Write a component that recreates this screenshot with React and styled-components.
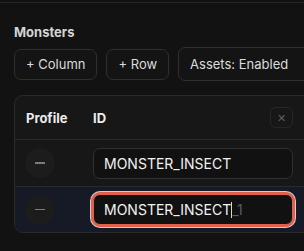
import React from 'react'
import { styled, createGlobalStyle } from 'styled-components'

const Global = createGlobalStyle`
  html, body {
    margin: 0;
    padding: 0;
    background: #121212;
    overflow: hidden;
  }
  body {
    font-family: Inter, "Noto Sans", sans-serif;
    color: #e6e6e6;
  }
`;

const Page = styled.div`
  width: 304px;
  height: 251px;
  overflow: hidden;
`;

const TopRule = styled.div`
  height: 2px;
  border-bottom: 1px solid #262626;
`;

const Section = styled.section`
  padding: 21px 0 0 14px;
`;

const Title = styled.h2`
  margin: 0 0 7px;
  font-size: 13px;
  line-height: 16px;
  font-weight: 700;
  color: #d4d4d4;
`;

const Toolbar = styled.div`
  display: flex;
  align-items: center;
  gap: 9px;
  height: 34px;
  width: 330px;
`;

const Button = styled.button`
  flex: none;
  height: 31px;
  padding: 0 ${p => p.$pad || 11}px;
  border: 1px solid #2f2f2f;
  border-radius: 7px;
  background: #141414;
  color: #dcdcdc;
  font-family: inherit;
  font-size: 13px;
  white-space: nowrap;
`;

const Select = styled(Button)`
  height: 34px;
  width: 150px;
  text-align: left;
`;

const Card = styled.div`
  margin-top: 14px;
  width: 310px;
  border: 1px solid #2a2a2a;
  border-radius: 9px;
  background: #171717;
  overflow: hidden;
`;

const Grid = styled.div`
  display: grid;
  grid-template-columns: 67px 200px 1fr;
  align-items: center;
  padding: 0 11px;
  height: ${p => p.$h}px;
  background: ${p => p.$active ? '#151a26' : 'transparent'};
  border-bottom: ${p => p.$last ? 'none' : '1px solid #2a2a2a'};
`;

const HeadCell = styled.div`
  display: flex;
  align-items: center;
  justify-content: space-between;
  font-size: 13px;
  font-weight: 700;
  color: #ececec;
`;

const CloseBtn = styled.div`
  width: 23px;
  height: 21px;
  box-sizing: border-box;
  border: 1px solid #272727;
  border-radius: 6px;
  display: flex;
  align-items: center;
  justify-content: center;
  color: #5e5e5e;
  font-size: 11px;
  font-weight: 400;
`;

const RoundBtn = styled.div`
  width: 30px;
  height: 30px;
  margin-left: -1px;
  border-radius: 50%;
  background: #1c1c1c;
  display: flex;
  align-items: center;
  justify-content: center;
  &::after {
    content: '';
    width: 10px;
    height: 1.5px;
    background: #7a7a7a;
  }
`;

const Field = styled.div`
  box-sizing: border-box;
  height: 31px;
  padding: 0 10px;
  display: flex;
  align-items: center;
  border: 1px solid ${p => p.$focus ? '#e0604c' : '#303030'};
  border-radius: 7px;
  background: #111111;
  box-shadow: ${p => p.$focus ? '0 0 0 2px #e0604c, 0 0 0 3px #cfcfcf' : 'none'};
  font-size: 14px;
  color: #f2f2f2;
  white-space: nowrap;
`;

const Caret = styled.span`
  display: inline-block;
  width: 1px;
  height: 16px;
  background: #d8d8d8;
`;

const Ghost = styled.span`
  color: #5c5c5c;
`;

export default function App() {
  return (
    <Page>
      <Global />
      <TopRule />
      <Section>
        <Title>Monsters</Title>
        <Toolbar>
          <Button>+ Column</Button>
          <Button>+ Row</Button>
          <Select>Assets: Enabled</Select>
        </Toolbar>
        <Card>
          <Grid $h={43}>
            <HeadCell>Profile</HeadCell>
            <HeadCell>
              ID
              <CloseBtn>✕</CloseBtn>
            </HeadCell>
          </Grid>
          <Grid $h={46}>
            <RoundBtn />
            <Field>MONSTER_INSECT</Field>
          </Grid>
          <Grid $h={45} $active $last>
            <RoundBtn />
            <Field $focus>MONSTER_INSECT<Caret /><Ghost>_1</Ghost></Field>
          </Grid>
        </Card>
      </Section>
    </Page>
  )
}
